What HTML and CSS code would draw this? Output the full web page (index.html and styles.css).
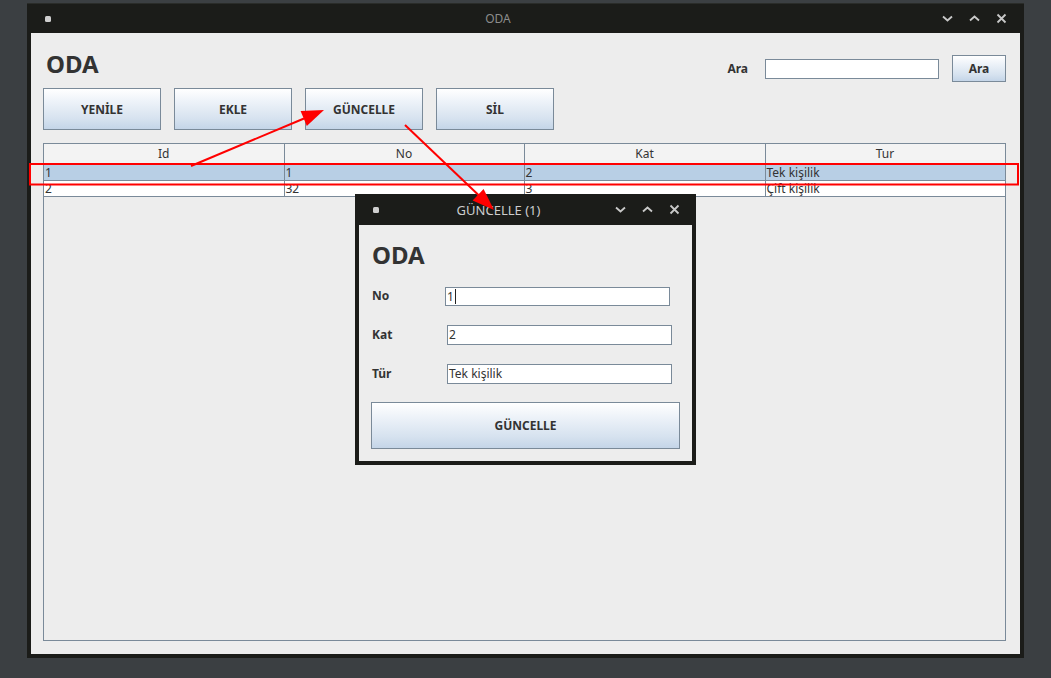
FILE: index.html
```html
<!DOCTYPE html>
<html lang="tr">
<head>
<meta charset="utf-8">
<title>ODA</title>
<link rel="stylesheet" href="styles.css">
</head>
<body>
<div class="desktop">
  <div class="window main-window">
    <div class="titlebar">
      <div class="tb-left"><span class="tb-dot"></span></div>
      <div class="tb-title">ODA</div>
      <div class="tb-right">
        <svg class="tb-icon" viewBox="0 0 11 11"><path d="M1 3.5 L5.5 7.5 L10 3.5" /></svg>
        <svg class="tb-icon" viewBox="0 0 11 11"><path d="M1 7.5 L5.5 3.5 L10 7.5" /></svg>
        <svg class="tb-icon" viewBox="0 0 11 11"><path d="M1.5 1.5 L9.5 9.5 M9.5 1.5 L1.5 9.5" /></svg>
      </div>
    </div>
    <div class="content">
      <div class="top-row">
        <h1 class="heading">ODA</h1>
        <div class="search">
          <span class="label">Ara</span>
          <div class="field search-field"></div>
          <button class="btn btn-small">Ara</button>
        </div>
      </div>
      <div class="actions">
        <button class="btn btn-action">YENİLE</button>
        <button class="btn btn-action">EKLE</button>
        <button class="btn btn-action">GÜNCELLE</button>
        <button class="btn btn-action">SİL</button>
      </div>
      <div class="scrollpane">
        <table class="grid">
          <colgroup><col class="c1"><col class="c2"><col class="c3"><col class="c4"></colgroup>
          <thead>
            <tr><th>Id</th><th>No</th><th>Kat</th><th>Tur</th></tr>
          </thead>
          <tbody>
            <tr class="selected"><td>1</td><td>1</td><td>2</td><td>Tek kişilik</td></tr>
            <tr><td>2</td><td>32</td><td>3</td><td>Çift kişilik</td></tr>
          </tbody>
        </table>
      </div>
    </div>
  </div>

  <div class="window dialog">
    <div class="titlebar dialog-titlebar">
      <div class="tb-left"><span class="tb-dot"></span></div>
      <div class="tb-title dialog-title">GÜNCELLE (1)</div>
      <div class="tb-right">
        <svg class="tb-icon" viewBox="0 0 11 11"><path d="M1 3.5 L5.5 7.5 L10 3.5" /></svg>
        <svg class="tb-icon" viewBox="0 0 11 11"><path d="M1 7.5 L5.5 3.5 L10 7.5" /></svg>
        <svg class="tb-icon" viewBox="0 0 11 11"><path d="M1.5 1.5 L9.5 9.5 M9.5 1.5 L1.5 9.5" /></svg>
      </div>
    </div>
    <div class="dialog-content">
      <h2 class="heading">ODA</h2>
      <div class="form-row"><span class="label form-label">No</span><div class="field form-field first-field">1<span class="caret"></span></div></div>
      <div class="form-row"><span class="label form-label">Kat</span><div class="field form-field">2</div></div>
      <div class="form-row"><span class="label form-label">Tür</span><div class="field form-field">Tek kişilik</div></div>
      <button class="btn btn-wide">GÜNCELLE</button>
    </div>
  </div>

  <svg class="annotations" width="1051" height="678" viewBox="0 0 1051 678">
    <rect x="30" y="164" width="988" height="20.5" fill="none" stroke="#ff0000" stroke-width="2"/>
    <line x1="191" y1="166" x2="304" y2="118.5" stroke="#ff0000" stroke-width="2"/>
    <polygon points="324,110 306.8,125.9 300.6,111.1" fill="#ff0000"/>
    <line x1="405" y1="125" x2="479" y2="195.5" stroke="#ff0000" stroke-width="2"/>
    <polygon points="494,210 472.6,200.6 483.6,189.0" fill="#ff0000"/>
  </svg>
</div>
</body>
</html>
```

FILE: styles.css
```css
* { box-sizing: border-box; }

html, body {
  margin: 0;
  padding: 0;
  background: #3b3f42;
}

.desktop {
  position: relative;
  width: 1051px;
  height: 678px;
  overflow: hidden;
  background: #3b3f42;
  font-family: "Noto Sans", "Open Sans", sans-serif;
  color: #333333;
}

.window {
  position: absolute;
  background: #1b1c19;
  display: flex;
  flex-direction: column;
}

.main-window {
  left: 27px;
  top: 3px;
  width: 997px;
  height: 655px;
  border-top: 1px solid #2a2c29;
}

.titlebar {
  height: 29px;
  display: grid;
  grid-template-columns: 1fr auto 1fr;
  align-items: center;
  padding: 0 17px 0 18px;
  flex: none;
}

.tb-left { display: flex; align-items: center; }

.tb-dot {
  width: 6px;
  height: 6px;
  border-radius: 1.5px;
  background: #cfcfcf;
}

.tb-title {
  font-size: 12px;
  color: #8c8c8c;
  line-height: 16px;
  margin-right: 56px;
}

.tb-right {
  display: flex;
  justify-content: flex-end;
  align-items: center;
  gap: 16px;
}

.tb-icon {
  width: 11px;
  height: 11px;
  fill: none;
  stroke: #c9c9c9;
  stroke-width: 1.8;
}

.content {
  flex: 1;
  margin: 0 4px 4px;
  background: #ededed;
  display: flex;
  flex-direction: column;
  padding: 22px 14px 13px 12px;
}

.top-row {
  display: flex;
  justify-content: space-between;
  align-items: flex-start;
  height: 27px;
}

.heading {
  margin: -3px 0 0 3px;
  font-size: 24px;
  line-height: 24px;
  font-weight: bold;
  color: #333333;
}

.search {
  display: flex;
  align-items: center;
  height: 27px;
}

.label {
  font-size: 12px;
  line-height: 16px;
  font-weight: bold;
  color: #333333;
}

.search .label { margin-right: 17px; }

.field {
  background: #ffffff;
  border: 1px solid #7a8a99;
  font-size: 12px;
  line-height: 17px;
  color: #333333;
  padding: 0 1px;
}

.search-field {
  width: 174px;
  height: 20px;
  margin-right: 13px;
}

.btn {
  font-family: "Noto Sans", "Open Sans", sans-serif;
  font-weight: bold;
  font-size: 12px;
  color: #333333;
  border: 1px solid #7a8a99;
  background: linear-gradient(to bottom, #ffffff 0%, #eef3f9 30%, #d6e2ef 75%, #c4d5e8 100%);
  padding: 0;
  cursor: default;
}

.btn-small {
  width: 54px;
  height: 27px;
}

.actions {
  display: flex;
  gap: 13px;
  margin-top: 6px;
}

.btn-action {
  width: 118px;
  height: 42px;
}

.scrollpane {
  margin-top: 13px;
  flex: 1;
  border: 1px solid #7a8a99;
  background: #ededed;
}

.grid {
  border-collapse: collapse;
  table-layout: fixed;
  width: 961px;
  font-size: 12px;
  color: #333333;
}

.grid col.c1, .grid col.c2, .grid col.c4 { width: 240px; }
.grid col.c3 { width: 241px; }

.grid th {
  font-weight: normal;
  height: 20px;
  line-height: 18px;
  padding: 0;
  background: #f3f3f3;
  border-right: 1px solid #7a8a99;
  border-bottom: 1px solid #7a8a99;
  text-align: center;
}

.grid td {
  height: 16px;
  line-height: 15px;
  padding: 0 0 0 1px;
  background: #ffffff;
  border-right: 1px solid #7a8a99;
  border-bottom: 1px solid #7a8a99;
  white-space: nowrap;
  overflow: hidden;
}

.grid tr.selected td { background: #b8cfe5; }

.dialog {
  left: 355px;
  top: 194px;
  width: 341px;
  height: 271px;
}

.dialog-titlebar {
  height: 31px;
  padding: 0 16px 0 18px;
}

.dialog-title {
  font-size: 13px;
  color: #cdcdcd;
}

.dialog-content {
  flex: 1;
  margin: 0 4px 4px;
  background: #ededed;
  padding: 18px 12px 0 12px;
  display: flex;
  flex-direction: column;
}

.dialog-content .heading {
  margin: 0 0 19px 1px;
  font-size: 24px;
}

.form-row {
  display: flex;
  align-items: center;
  height: 20px;
  margin-bottom: 19px;
}

.form-label {
  width: 75px;
  margin-left: 1px;
}

.form-field {
  width: 225px;
  height: 20px;
}

.first-field {
  margin-left: -2px;
  width: 225px;
  height: 19px;
}

.caret {
  display: inline-block;
  width: 1px;
  height: 15px;
  background: #222222;
  vertical-align: -3px;
  margin-left: 1px;
}

.btn-wide {
  width: 309px;
  height: 47px;
  margin-top: -1px;
}

.annotations {
  position: absolute;
  left: 0;
  top: 0;
  pointer-events: none;
}
```
